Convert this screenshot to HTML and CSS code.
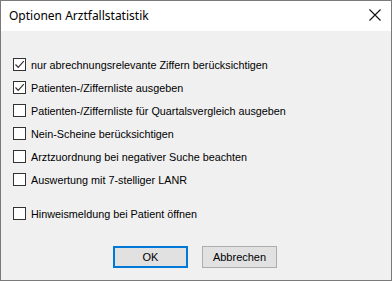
FILE: index.html
```html
<!DOCTYPE html>
<html>
<head>
<meta charset="utf-8">
<link rel="stylesheet" href="styles.css">
</head>
<body>
<div class="window">
  <div class="titlebar">
    <span class="title">Optionen Arztfallstatistik</span>
    <svg class="close" width="12" height="12" viewBox="0 0 12 12"><path d="M0.5 0.5 L11.5 11.5 M11.5 0.5 L0.5 11.5" stroke="#111" stroke-width="1.1" fill="none"/></svg>
  </div>
  <div class="content">
    <div class="options">
      <label class="row"><span class="box checked"><svg width="11" height="11" viewBox="0 0 11 11"><path d="M1.5 5.5 L4.2 8.3 L9.8 2.2" stroke="#333" stroke-width="1.2" fill="none"/></svg></span>nur abrechnungsrelevante Ziffern berücksichtigen</label>
      <label class="row"><span class="box checked"><svg width="11" height="11" viewBox="0 0 11 11"><path d="M1.5 5.5 L4.2 8.3 L9.8 2.2" stroke="#333" stroke-width="1.2" fill="none"/></svg></span>Patienten-/Ziffernliste ausgeben</label>
      <label class="row"><span class="box"></span>Patienten-/Ziffernliste für Quartalsvergleich ausgeben</label>
      <label class="row"><span class="box"></span>Nein-Scheine berücksichtigen</label>
      <label class="row"><span class="box"></span>Arztzuordnung bei negativer Suche beachten</label>
      <label class="row"><span class="box"></span>Auswertung mit 7-stelliger LANR</label>
      <label class="row gap"><span class="box"></span>Hinweismeldung bei Patient öffnen</label>
    </div>
    <div class="buttons">
      <button class="btn default">OK</button>
      <button class="btn">Abbrechen</button>
    </div>
  </div>
</div>
</body>
</html>
```
FILE: styles.css
```css
html, body {
  margin: 0;
  padding: 0;
}
body {
  width: 392px;
  height: 281px;
  overflow: hidden;
  font-family: "Liberation Sans", Arial, sans-serif;
}
.window {
  box-sizing: border-box;
  width: 392px;
  height: 281px;
  border: 1px solid #7a7a7a;
  background: #f0f0f0;
  display: flex;
  flex-direction: column;
}
.titlebar {
  height: 30px;
  background: #fff;
  display: flex;
  align-items: center;
  justify-content: space-between;
  padding: 0 9px 0 8px;
}
.title {
  font-family: "Noto Sans", "Open Sans", sans-serif;
  font-size: 12px;
  color: #000;
  position: relative;
  top: -1px;
}
.close {
  margin-right: 1px;
  position: relative;
  top: -1px;
}
.content {
  flex: 1;
  display: flex;
  flex-direction: column;
  padding: 27px 0 0 12px;
}
.options {
  display: flex;
  flex-direction: column;
  gap: 10px;
}
.row {
  display: flex;
  align-items: center;
  height: 13px;
  font-size: 10.8px;
  color: #000;
  white-space: nowrap;
}
.row.gap {
  margin-top: 11px;
}
.box {
  box-sizing: border-box;
  width: 13px;
  height: 13px;
  border: 1px solid #333;
  background: #fff;
  margin-right: 5px;
  display: flex;
  align-items: center;
  justify-content: center;
  flex: none;
}
.buttons {
  display: flex;
  gap: 14px;
  padding-left: 100px;
  margin-top: 26px;
}
.btn {
  box-sizing: border-box;
  width: 75px;
  height: 22px;
  font-family: "Liberation Sans", Arial, sans-serif;
  font-size: 11px;
  color: #000;
  background: #e1e1e1;
  border: 1px solid #adadad;
  padding: 0;
}
.btn.default {
  border: 2px solid #0078d7;
}
```
